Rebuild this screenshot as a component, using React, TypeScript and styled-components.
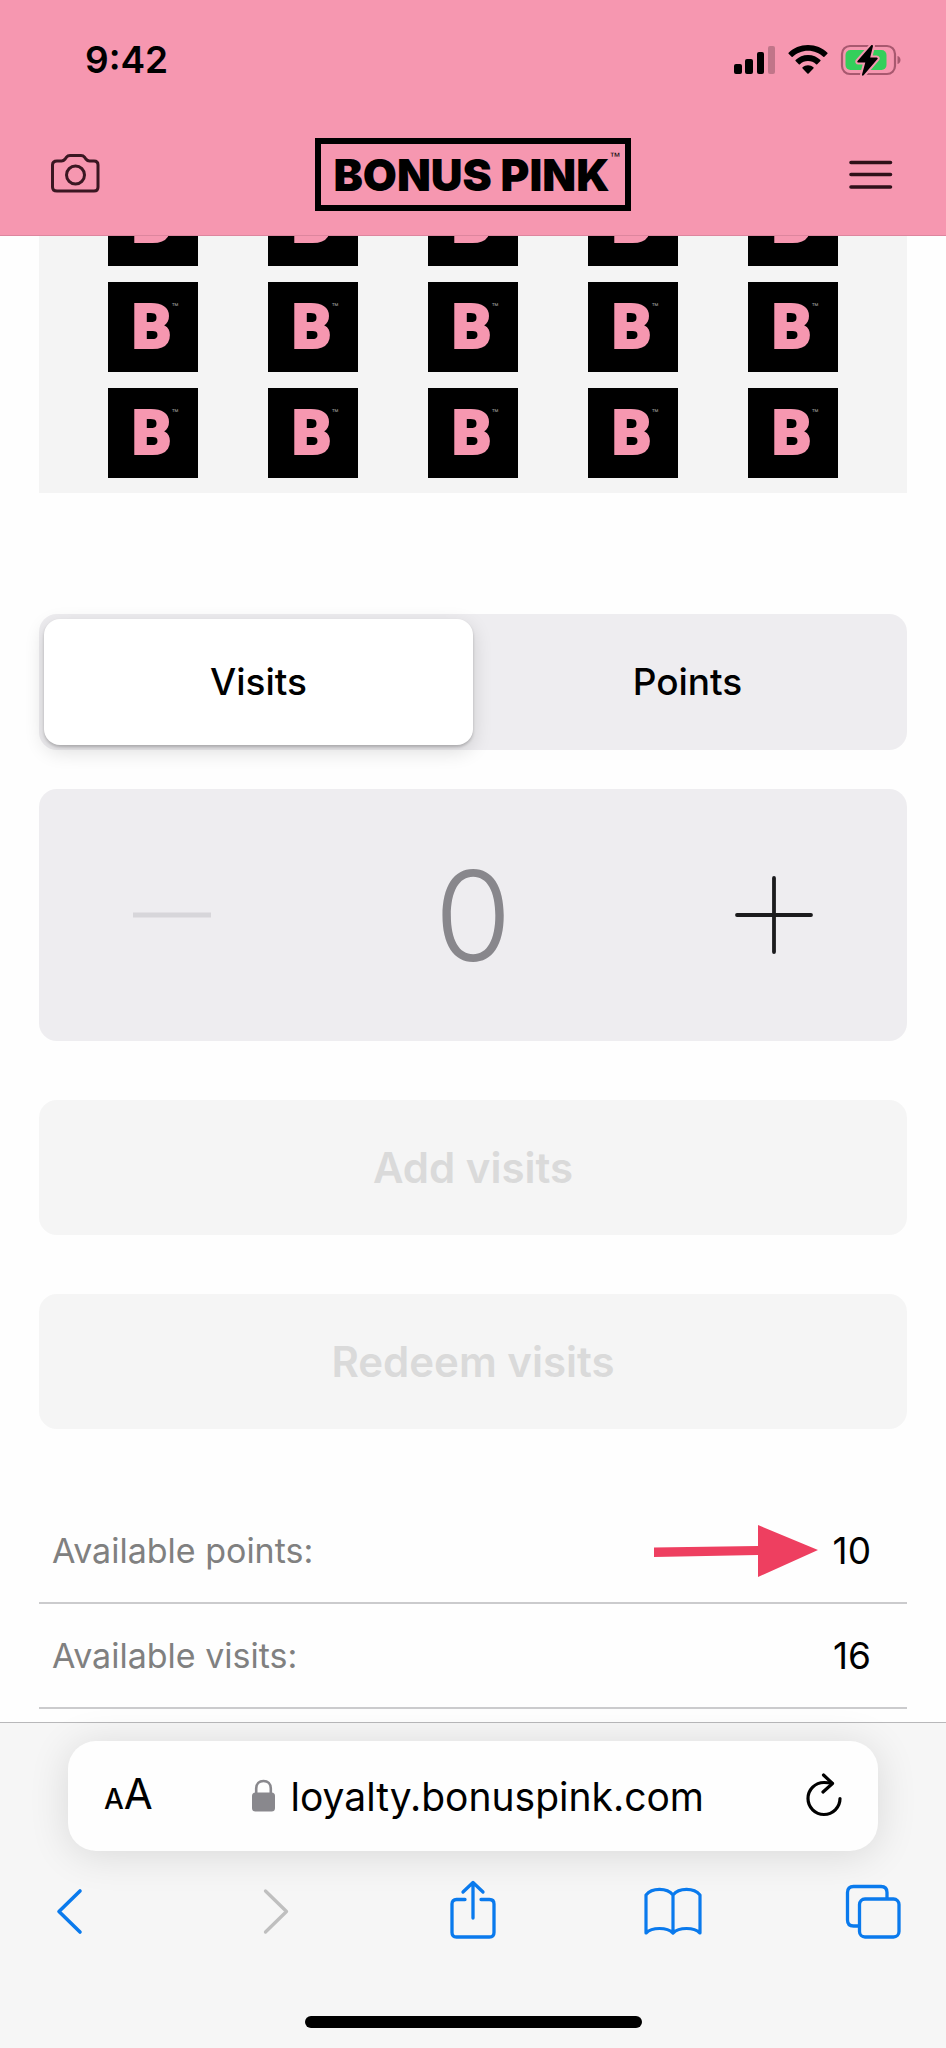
import React, { useState } from "react";
import styled, { createGlobalStyle } from "styled-components";

const PINK = "#f697b0";
const BLUE = "#0a7aed";
const INK = "#000000";

const GlobalStyle = createGlobalStyle`
  *, *::before, *::after { box-sizing: border-box; }
  body {
    margin: 0;
    background: #fefefe;
    color: ${INK};
    font-family: Inter, "Liberation Sans", sans-serif;
  }
  button, input { font-family: inherit; color: inherit; }
`;

const Page = styled.div`
  display: flex;
  flex-direction: column;
  min-height: 100vh;
`;

const Header = styled.header`
  background: ${PINK};
  border-bottom: 1px solid #dd869e;
`;

const StatusBar = styled.div`
  display: flex;
  align-items: center;
  justify-content: space-between;
  height: 120px;
  padding: 0 44px 0 85px;
`;

const Clock = styled.time`
  font-size: 37px;
  line-height: 44px;
  font-weight: 600;
`;

const StatusIcons = styled.div`
  display: flex;
  align-items: center;
  gap: 12px;
`;

const NavBar = styled.nav`
  display: grid;
  grid-template-columns: 1fr auto 1fr;
  align-items: center;
  height: 115px;
  padding: 0 48px 6px;
`;

const IconButton = styled.button<{ $end?: boolean }>`
  display: flex;
  padding: 0;
  border: 0;
  background: none;
  cursor: pointer;
  justify-self: ${(p) => (p.$end ? "end" : "start")};
`;

const Wordmark = styled.a`
  display: flex;
  align-items: center;
  justify-content: center;
  width: 316px;
  height: 73px;
  padding-left: 8px;
  border: 6px solid ${INK};
  color: ${INK};
  font-size: 44px;
  line-height: 60px;
  font-weight: 900;
  text-decoration: none;
  white-space: nowrap;
`;

const Trademark = styled.sup`
  align-self: flex-start;
  font-family: "Liberation Sans", sans-serif;
  font-weight: 400;
  font-size: 11px;
  line-height: 24px;
`;

const Main = styled.main`
  display: flex;
  flex-direction: column;
  padding: 0 39px 13px;
`;

const StampCard = styled.section`
  display: flex;
  flex-direction: column;
  gap: 16px;
  padding: 0 34px 15px;
  background: #f4f4f4;
`;

const StampRow = styled.div<{ $cut?: boolean }>`
  display: grid;
  grid-template-columns: repeat(5, 1fr);
  justify-items: center;
  align-content: end;
  height: ${(p) => (p.$cut ? "30px" : "90px")};
  overflow: hidden;
`;

const Stamp = styled.div`
  display: flex;
  align-items: center;
  width: 90px;
  height: 90px;
  padding-left: 24px;
  background: ${INK};
  color: ${PINK};
  font-family: Roboto, Inter, sans-serif;
  font-size: 61px;
  line-height: 90px;
  font-weight: 900;
  -webkit-text-stroke: 2px ${PINK};
`;

const StampMark = styled(Trademark)`
  padding-top: 20px;
  color: #a8a8a8;
  font-size: 7px;
  line-height: 8px;
  -webkit-text-stroke: 0;
`;

const Segmented = styled.div`
  display: grid;
  grid-template-columns: 1fr 1fr;
  height: 136px;
  margin-top: 121px;
  padding: 5px;
  border-radius: 18px;
  background: #eeedf0;
`;

const Segment = styled.button<{ $on: boolean }>`
  border: 0;
  border-radius: 16px;
  background: ${(p) => (p.$on ? "#ffffff" : "transparent")};
  box-shadow: ${(p) =>
    p.$on ? "0 2px 3px rgba(0, 0, 0, 0.2), 0 6px 20px rgba(0, 0, 0, 0.14)" : "none"};
  font-size: 37px;
  line-height: 44px;
  font-weight: 500;
  cursor: pointer;
`;

const Counter = styled.div`
  display: grid;
  grid-template-columns: 78px 1fr 78px;
  align-items: center;
  height: 252px;
  margin-top: 39px;
  padding: 0 94px;
  border-radius: 18px;
  background: #eeedf0;
`;

const CountInput = styled.input`
  width: 100%;
  height: 150px;
  padding: 2px 0 0;
  border: 0;
  outline: 0;
  background: none;
  color: #88878c;
  font-size: 125px;
  line-height: 150px;
  font-weight: 300;
  text-align: center;
`;

const ActionButton = styled.button`
  height: 135px;
  margin-top: 59px;
  border: 0;
  border-radius: 18px;
  background: #f5f5f5;
  color: #dadada;
  font-size: 42px;
  line-height: 48px;
  font-weight: 600;
`;

const Totals = styled.dl`
  margin: 70px 0 0;
`;

const TotalRow = styled.div`
  position: relative;
  display: flex;
  align-items: center;
  justify-content: space-between;
  height: 105px;
  padding: 0 36px 0 13px;
  border-bottom: 2px solid #cbcbcd;
  line-height: 44px;
`;

const TotalLabel = styled.dt`
  color: #808080;
  font-size: 34px;
`;

const TotalValue = styled.dd`
  margin: 0;
  font-size: 37px;
`;

const Pointer = styled.svg`
  position: absolute;
  right: 89px;
  top: 26px;
`;

const BrowserBar = styled.footer`
  margin-top: auto;
  padding: 18px 0 20px;
  border-top: 1px solid #b8b8ba;
  background: #f6f6f6;
`;

const AddressBar = styled.div`
  display: grid;
  grid-template-columns: 1fr auto 1fr;
  align-items: center;
  height: 110px;
  margin: 0 68px;
  padding: 0 36px;
  border-radius: 28px;
  background: #fefefe;
  box-shadow: 0 4px 40px rgba(0, 0, 0, 0.12);
`;

const TextSize = styled.button`
  display: flex;
  align-items: baseline;
  justify-self: start;
  padding: 0;
  border: 0;
  background: none;
  font-size: 42px;
  line-height: 48px;
  cursor: pointer;
`;

const SmallLetter = styled.span`
  font-size: 28px;
  font-weight: 500;
`;

const AddressLabel = styled.label`
  display: flex;
  align-items: center;
  gap: 16px;
  padding-left: 8px;
`;

const AddressInput = styled.input`
  width: 412px;
  height: 56px;
  padding: 0;
  border: 0;
  outline: 0;
  background: none;
  font-size: 39px;
  line-height: 48px;
`;

const Tools = styled.nav`
  display: flex;
  align-items: center;
  justify-content: space-between;
  height: 64px;
  margin-top: 28px;
  padding: 0 44px 0 42px;
`;

const HomeIndicator = styled.div`
  width: 337px;
  height: 12px;
  margin: 73px auto 0;
  border-radius: 6px;
  background: ${INK};
`;

const SignalIcon = () => (
  <svg width="42" height="30" viewBox="0 0 42 30" aria-hidden="true">
    <rect x="0" y="19" width="8" height="10" rx="2" />
    <rect x="11" y="14" width="8" height="15" rx="2" />
    <rect x="23" y="7" width="7" height="22" rx="2" />
    <rect x="34" y="1" width="7" height="28" rx="2" opacity="0.22" />
  </svg>
);

const WifiIcon = () => (
  <svg width="40" height="30" viewBox="0 0 40 30" aria-hidden="true">
    <path d="M20 0C12.300 0 5.400 3 .6 7.700a.8.800 0 0 0 0 1.100l3 3a.8.800 0 0 0 1.100 0C8.700 8 14 5.700 20 5.700s11.300 2.300 15.300 6.100a.8.800 0 0 0 1.100 0l3-3a.8.800 0 0 0 0-1.100C34.600 3 27.700 0 20 0Z" />
    <path d="M20 10c-4.800 0-9.200 1.900-12.400 5a.8.800 0 0 0 0 1.100l3.200 3.100a.8.800 0 0 0 1.100 0A11.700 11.700 0 0 1 20 16c3.100 0 5.900 1.200 8.100 3.200a.8.800 0 0 0 1.100 0l3.200-3.100a.8.800 0 0 0 0-1.100c-3.200-3.100-7.600-5-12.400-5Z" />
    <path d="M20 20.300c-2.100 0-4 .8-5.400 2a.8.800 0 0 0 0 1.200l4.800 4.900a.8.800 0 0 0 1.200 0l4.800-4.900a.8.800 0 0 0 0-1.200c-1.400-1.200-3.300-2-5.400-2Z" />
  </svg>
);

const BatteryIcon = () => (
  <svg width="62" height="32" viewBox="0 0 62 32" aria-hidden="true">
    <rect x="2" y="2" width="53" height="28" rx="8" fill="none" stroke="#a8586f" strokeWidth="2.200" />
    <path d="M57.500 12c4 .8 4 7.200 0 8Z" fill="#a8586f" />
    <rect x="5.500" y="6" width="41" height="20" rx="5" fill="#34cf5b" />
    <path
      d="M31 1.500 17.500 17a1 1 0 0 0 .8 1.600h7L22 30.500c-.3 1.200.9 1.700 1.600.8L37.500 15a1 1 0 0 0-.8-1.600h-6.500l2.700-11c.3-1.300-1-1.900-1.900-.9Z"
      fill={INK}
      stroke={PINK}
      strokeWidth="4"
      paintOrder="stroke"
    />
  </svg>
);

const CameraIcon = () => (
  <svg width="54" height="44" viewBox="0 1 54 44" fill="none" stroke="#3a1722" strokeWidth="3" aria-hidden="true">
    <path
      d="M9 9h4.500c1.600 0 2.500-.6 3.400-1.700L18.500 5.200C19.400 4 20.400 3.500 22 3.500h11c1.600 0 2.600.5 3.500 1.700l1.600 2.100C39 8.400 39.900 9 41.500 9H46c2.600 0 4 1.400 4 4v22c0 2.600-1.400 4-4 4H9c-2.800 0-4.500-1.400-4.500-4V13c0-2.600 1.700-4 4.500-4Z"
      strokeLinejoin="round"
    />
    <circle cx="27.500" cy="23" r="9" />
  </svg>
);

const MenuIcon = () => (
  <svg width="49" height="32" viewBox="0 0 49 32" stroke="#2e1119" strokeWidth="3.600" strokeLinecap="round" aria-hidden="true">
    <path d="M2 3.500h39.500M2 15.500h39.500M2 28h39.500" />
  </svg>
);

const MinusIcon = () => (
  <svg width="78" height="78" viewBox="0 0 78 78" aria-hidden="true">
    <path d="M0 39h78" stroke="#d7d6da" strokeWidth="5" />
  </svg>
);

const PlusIcon = () => (
  <svg width="78" height="78" viewBox="0 0 78 78" aria-hidden="true">
    <path d="M2 39h74M39 2v74" stroke="#1b1b1d" strokeWidth="3.800" strokeLinecap="round" />
  </svg>
);

const LockIcon = () => (
  <svg width="23" height="34" viewBox="0 0 23 34" aria-hidden="true">
    <rect x="0" y="13.500" width="23" height="19" rx="3.500" fill="#89888d" />
    <path d="M4.200 15V9.500C4.200 4.500 7.300 2 11.500 2s7.300 2.500 7.300 7.500V15" fill="none" stroke="#89888d" strokeWidth="2.600" />
  </svg>
);

const ReloadIcon = () => (
  <svg width="36" height="46" viewBox="0 0 36 46" fill="none" stroke={INK} strokeWidth="3.200" strokeLinecap="round" strokeLinejoin="round" aria-hidden="true">
    <path d="M34 25.500a16 16 0 1 1-16-16c3 0 5.500.3 8 .8" />
    <path d="M17.500 2 26.500 10.500l-9.500 8.500" />
  </svg>
);

const BackIcon = () => (
  <svg width="60" height="64" viewBox="0 0 60 64" fill="none" stroke={BLUE} strokeWidth="3.600" strokeLinecap="round" strokeLinejoin="round" aria-hidden="true">
    <path d="M38 12 17 32.500 38 53" />
  </svg>
);

const ForwardIcon = () => (
  <svg width="60" height="64" viewBox="0 0 60 64" fill="none" stroke="#bfbfbf" strokeWidth="3.300" strokeLinecap="round" strokeLinejoin="round" aria-hidden="true">
    <path d="m23.500 12 21 20.500-21 20.500" />
  </svg>
);

const ShareIcon = () => (
  <svg width="60" height="64" viewBox="-6 0 60 64" fill="none" stroke={BLUE} strokeWidth="3.300" strokeLinecap="round" strokeLinejoin="round" aria-hidden="true">
    <path d="M17 20.500H8.500c-3 0-4.500 1.600-4.500 4.500v28.500c0 3 1.500 4.500 4.500 4.500h33c3 0 4.500-1.500 4.500-4.500V25c0-2.900-1.500-4.500-4.500-4.500H33" />
    <path d="M25 39V4M15 13 25 3.500 35 13" />
  </svg>
);

const BookIcon = () => (
  <svg width="60" height="64" viewBox="-1 1 60 64" fill="none" stroke={BLUE} strokeWidth="3.200" strokeLinecap="round" strokeLinejoin="round" aria-hidden="true">
    <path d="M30 17C24 9.500 9 9.500 3 17v38c6-6 21-6 27 0V17ZM30 17c6-7.500 21-7.500 27 0v38c-6-6-21-6-27 0" />
  </svg>
);

const TabsIcon = () => (
  <svg width="60" height="64" viewBox="-3 1 60 64" fill="none" stroke={BLUE} strokeWidth="3.300" strokeLinejoin="round" aria-hidden="true">
    <path d="M14 48H8.500C4.600 48 2.500 46 2.500 42V14.500c0-4 2.100-6 6-6H36c4 0 6 2 6 6V21" />
    <rect x="14.500" y="21" width="39.500" height="38" rx="5.500" />
  </svg>
);

const columns = [0, 1, 2, 3, 4];

const Stamps = ({ cut }: { cut?: boolean }) => (
  <StampRow $cut={cut}>
    {columns.map((c) => (
      <Stamp key={c}>
        B{!cut && <StampMark>™</StampMark>}
      </Stamp>
    ))}
  </StampRow>
);

export default function App() {
  const [mode, setMode] = useState("visits");
  const [count, setCount] = useState(0);

  return (
    <>
      <GlobalStyle />
      <Page>
        <Header>
          <StatusBar>
            <Clock>9:42</Clock>
            <StatusIcons>
              <SignalIcon />
              <WifiIcon />
              <BatteryIcon />
            </StatusIcons>
          </StatusBar>
          <NavBar>
            <IconButton aria-label="Scan">
              <CameraIcon />
            </IconButton>
            <Wordmark href="#">
              BONUS PINK<Trademark>™</Trademark>
            </Wordmark>
            <IconButton $end aria-label="Menu">
              <MenuIcon />
            </IconButton>
          </NavBar>
        </Header>

        <Main>
          <StampCard>
            <Stamps cut />
            <Stamps />
            <Stamps />
          </StampCard>

          <Segmented role="tablist">
            <Segment role="tab" aria-selected={mode === "visits"} $on={mode === "visits"} onClick={() => setMode("visits")}>
              Visits
            </Segment>
            <Segment role="tab" aria-selected={mode === "points"} $on={mode === "points"} onClick={() => setMode("points")}>
              Points
            </Segment>
          </Segmented>

          <Counter>
            <IconButton aria-label="Decrease" disabled={count === 0} onClick={() => setCount(count - 1)}>
              <MinusIcon />
            </IconButton>
            <CountInput
              aria-label="Quantity"
              inputMode="numeric"
              value={count}
              onChange={(e) => setCount(Number(e.target.value) || 0)}
            />
            <IconButton aria-label="Increase" onClick={() => setCount(count + 1)}>
              <PlusIcon />
            </IconButton>
          </Counter>

          <ActionButton disabled={count === 0}>Add {mode}</ActionButton>
          <ActionButton disabled={count === 0}>Redeem {mode}</ActionButton>

          <Totals>
            <TotalRow>
              <TotalLabel>Available points:</TotalLabel>
              <TotalValue>10</TotalValue>
              <Pointer width="164" height="52" viewBox="0 0 164 52" aria-hidden="true">
                <path d="M0 22.500 104 21V0l60 25-60 27V30L0 32Z" fill="#ee3f60" />
              </Pointer>
            </TotalRow>
            <TotalRow>
              <TotalLabel>Available visits:</TotalLabel>
              <TotalValue>16</TotalValue>
            </TotalRow>
          </Totals>
        </Main>

        <BrowserBar>
          <AddressBar>
            <TextSize aria-label="Text size">
              <SmallLetter>A</SmallLetter>A
            </TextSize>
            <AddressLabel>
              <LockIcon />
              <AddressInput aria-label="Address" defaultValue="loyalty.bonuspink.com" />
            </AddressLabel>
            <IconButton $end aria-label="Reload">
              <ReloadIcon />
            </IconButton>
          </AddressBar>
          <Tools>
            <IconButton aria-label="Back">
              <BackIcon />
            </IconButton>
            <IconButton aria-label="Forward" disabled>
              <ForwardIcon />
            </IconButton>
            <IconButton aria-label="Share">
              <ShareIcon />
            </IconButton>
            <IconButton aria-label="Bookmarks">
              <BookIcon />
            </IconButton>
            <IconButton aria-label="Tabs">
              <TabsIcon />
            </IconButton>
          </Tools>
          <HomeIndicator />
        </BrowserBar>
      </Page>
    </>
  );
}
